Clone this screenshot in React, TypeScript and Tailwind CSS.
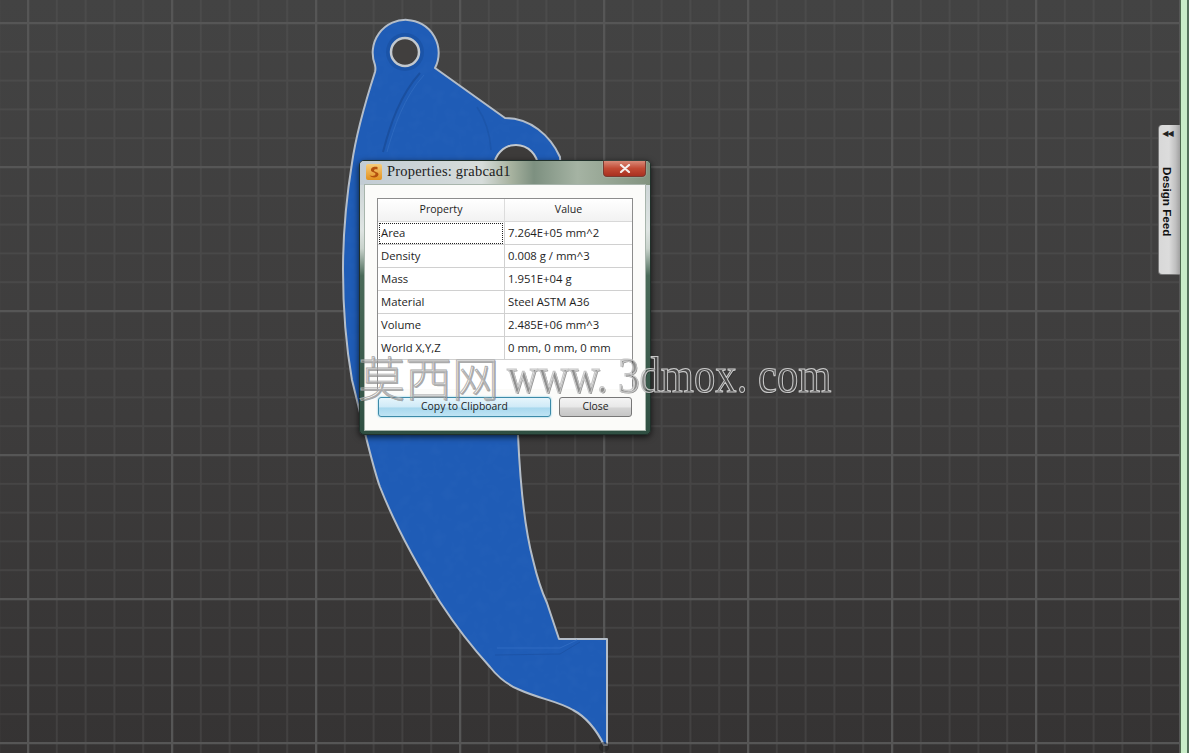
import React from "react";

const rows: [string, string][] = [
  ["Area", "7.264E+05 mm^2"],
  ["Density", "0.008 g / mm^3"],
  ["Mass", "1.951E+04 g"],
  ["Material", "Steel ASTM A36"],
  ["Volume", "2.485E+06 mm^3"],
  ["World X,Y,Z", "0 mm, 0 mm, 0 mm"],
];

const partPath =
  "M435 68 L505 118 C530 118 550 135 560 157 C565 230 525 330 518 435 C520 480 525 530 533 560 C537 577 541 590 547 603 L559 639 L607 639 L607 745 L604 745 C597 731 588 718 573 710 C558 701 540 699 520 690 C505 684 497 676 490 667 C470 645 455 625 440 602 C420 570 395 525 380 487 C372 465 362 420 352 380 C345 340 343 300 343 270 C343 235 346 200 352 163 C356 135 366 100 375 72 C376 68 375 66 375 65 A33 33 0 1 1 435 68 Z";

function Canvas() {
  return (
    <svg className="absolute inset-0 blur-[0.5px]" width="1189" height="753" viewBox="0 0 1189 753">
      <defs>
        <pattern id="minor" x="27" y="22" width="28.8" height="28.8" patternUnits="userSpaceOnUse">
          <path d="M1 0V28.8M0 1H28.8" stroke="#5a5a5a" strokeWidth="2" strokeOpacity="0.35" fill="none" />
        </pattern>
        <pattern id="major" x="27" y="22" width="144" height="144" patternUnits="userSpaceOnUse">
          <path d="M1 0V144M0 1H144" stroke="#565656" strokeWidth="2.5" fill="none" />
        </pattern>
        <filter id="tex" x="0" y="0" width="100%" height="100%">
          <feTurbulence type="fractalNoise" baseFrequency="0.09" numOctaves="2" seed="4" />
          <feColorMatrix values="0 0 0 0 0.45 0 0 0 0 0.62 0 0 0 0 0.95 0.7 0 0 0 -0.3" />
          <feComposite in2="SourceGraphic" operator="in" />
        </filter>
      </defs>
      <rect width="1189" height="753" fill="url(#minor)" />
      <rect width="1189" height="753" fill="url(#major)" />
      <path d={partPath} fill="#1f5cb6" stroke="#b4bdc8" strokeWidth="2" strokeLinejoin="round" />
      <path d={partPath} fill="#fff" filter="url(#tex)" opacity="0.08" />
      <path d="M420 73 C400 95 390 125 383 152" stroke="#1a4f9f" strokeWidth="2" fill="none" />
      <path d="M424 75 C404 97 394 127 387 152" stroke="#2d69bf" strokeWidth="1" fill="none" />
      <path d="M477 107 C486 120 490 135 491 150" stroke="#1a4f9f" strokeWidth="1.5" fill="none" opacity="0.5" />
      <path d="M497 648 L560 648 L577 640" stroke="#2f6bc2" strokeWidth="1" fill="none" />
      <path d="M495 655 L560 654 L580 642" stroke="#1a4f9f" strokeWidth="1" fill="none" opacity="0.6" />
      <circle cx="405" cy="52" r="19" fill="#1b54a8" />
      <circle cx="405" cy="52" r="14" fill="#413f3e" stroke="#c2c8ce" strokeWidth="2.5" />
      <circle cx="516" cy="167" r="22" fill="#3d3b3a" stroke="#c2c8ce" strokeWidth="2" />
      <circle cx="604" cy="747" r="5" fill="#222" opacity="0.5" />
    </svg>
  );
}

function Dialog() {
  return (
    <div className="absolute left-[359px] top-[160px] flex h-[275px] w-[292px] flex-col rounded-[5px] border border-[#20302a] bg-[linear-gradient(180deg,#c4cdd0_0%,#dfe5e3_25%,#c9d3cc_32%,#4a6a58_42%,#2f4f42_100%)] px-[5px] pb-[4px] shadow-[0_2px_6px_rgba(0,0,0,0.7)]">
      <div className="-mx-[5px] flex h-[24px] items-center rounded-t-[4px] bg-[linear-gradient(90deg,#c2ccd4_0%,#d6dcda_42%,#a8b3a0_52%,#7d9080_60%,#a5b3a3_75%,#82937f_100%)] pb-[3px] pl-[6px]">
        <svg width="16" height="16" viewBox="0 0 16 16" className="shrink-0">
          <defs>
            <linearGradient id="ico" x1="0" y1="0" x2="0" y2="1">
              <stop offset="0" stopColor="#f7cc7a" />
              <stop offset="1" stopColor="#e2911f" />
            </linearGradient>
          </defs>
          <rect width="16" height="16" rx="2" fill="url(#ico)" />
          <path d="M11.5 3C8 2 4.5 3.5 5 6.5C5.5 8.5 9.5 8 9.5 10C9.5 12 6.5 12.5 3.5 11.5C6 14.5 12 14 12.5 10.5C12.8 8 8 8 8 6.5C8 5.2 10 5 11.5 5.5Z" fill="#b4500e" />
        </svg>
        <span className="ml-[5px] font-['Liberation_Serif',serif] text-[14.5px] leading-none tracking-[0.2px] text-[#1c1c1c]">
          Properties: grabcad1
        </span>
        <div className="absolute right-[4px] top-0 flex h-[16px] w-[43px] items-center justify-center rounded-b-[4px] border border-t-0 border-[#7a3a30] bg-[linear-gradient(180deg,#d98a78_0%,#c24a34_50%,#a83020_100%)] shadow-[0_0_1px_#fff]">
          <svg width="12" height="9" viewBox="0 0 12 9">
            <path d="M2 1L10 8M10 1L2 8" stroke="#f4f0ee" strokeWidth="2.2" strokeLinecap="round" />
          </svg>
        </div>
      </div>
      <div className="flex flex-1 flex-col bg-[#fbfbf9] px-[12px] pt-[13px] shadow-[0_0_0_1px_#a8b5ac]">
        <div className="h-[191px] w-[256px] border-x border-t border-[#8c8c8c] bg-white font-['Open_Sans',sans-serif] text-[11.3px] text-[#1e1e1e]">
          <div className="grid h-[23px] grid-cols-[127px_1fr] border-b border-[#d8d8d8] bg-[linear-gradient(180deg,#ffffff,#f2f2f2)] text-[10.6px]">
            <div className="flex items-center justify-center border-r border-[#dcdcdc]">Property</div>
            <div className="flex items-center justify-center">Value</div>
          </div>
          {rows.map(([k, v], i) => (
            <div key={k} className="grid h-[23px] grid-cols-[127px_1fr] border-b border-[#d0d0d0]">
              <div className="flex items-center border-r border-[#d0d0d0] pl-[1px]">
                <span
                  className={
                    i === 0
                      ? "flex h-[21px] w-[124px] items-center border border-dotted border-[#222] pl-[1px]"
                      : "pl-[2px]"
                  }
                >
                  {k}
                </span>
              </div>
              <div className="flex items-center pl-[3px]">{v}</div>
            </div>
          ))}
        </div>
        <div className="mt-[8px] flex gap-[8px] pl-[1px] font-['Open_Sans',sans-serif] text-[10.4px] text-[#222]">
          <button className="flex h-[20px] w-[173px] items-center justify-center rounded-[3px] border border-[#3c8aa8] bg-[linear-gradient(180deg,#e6f5fc_0%,#cfeaf7_50%,#a8d8ee_55%,#bfe4f4_100%)] shadow-[0_0_2px_#6cc0e0]">
            Copy to Clipboard
          </button>
          <button className="flex h-[20px] w-[73px] items-center justify-center rounded-[3px] border border-[#777] bg-[linear-gradient(180deg,#f4f4f4_0%,#e8e8e8_50%,#d4d4d4_55%,#c6c6c6_100%)]">
            Close
          </button>
        </div>
      </div>
    </div>
  );
}

function Watermark() {
  return (
    <div className="pointer-events-none absolute left-[358px] top-[350px] flex h-[50px] items-center whitespace-nowrap">
      <span className="font-['Noto_Sans_CJK_SC',serif] text-[47px] leading-none font-light text-[rgba(230,230,230,0.25)] [-webkit-text-stroke:0.8px_#a8a8a8] [text-shadow:1px_1px_0_rgba(40,40,40,0.4)]">
        莫西网
      </span>
      <span className="ml-[8px] inline-block origin-left scale-y-[1.2] font-['Liberation_Serif',serif] text-[42.7px] leading-none text-[rgba(150,150,150,0.25)] [-webkit-text-stroke:1px_#c8c8c8] [text-shadow:1px_1px_0_rgba(30,30,30,0.5)]">
        www. 3dmox. com
      </span>
    </div>
  );
}

function DesignFeedTab() {
  return (
    <div className="absolute left-[1158px] top-[125px] flex h-[150px] w-[23px] flex-col items-center rounded-l-[4px] border-b border-l border-[#777] bg-[linear-gradient(90deg,#d8d8d8_0%,#dcdcdc_45%,#c0c0c0_75%,#9a9a9a_100%)] pr-[5px]">
      <span className="mt-[4px] font-['DejaVu_Sans',sans-serif] text-[8px] leading-[10px] tracking-[-1px] text-[#222]">◀◀</span>
      <span className="mt-[28px] font-['Liberation_Sans',sans-serif] text-[11.7px] leading-none font-bold text-[#111] [writing-mode:vertical-rl]">
        Design Feed
      </span>
    </div>
  );
}

export default function App() {
  return (
    <div className="relative flex h-[753px] w-[1189px] overflow-hidden bg-[linear-gradient(180deg,#434343_0%,#3e3d3d_50%,#353333_100%)]">
      <Canvas />
      <Dialog />
      <Watermark />
      <DesignFeedTab />
      <div className="absolute right-0 top-0 flex h-full">
        <div className="w-[1px] bg-[#4f6a4f]" />
        <div className="w-[6px] bg-[#c8ecc8]" />
        <div className="w-[2px] bg-[#53705a]" />
      </div>
    </div>
  );
}
